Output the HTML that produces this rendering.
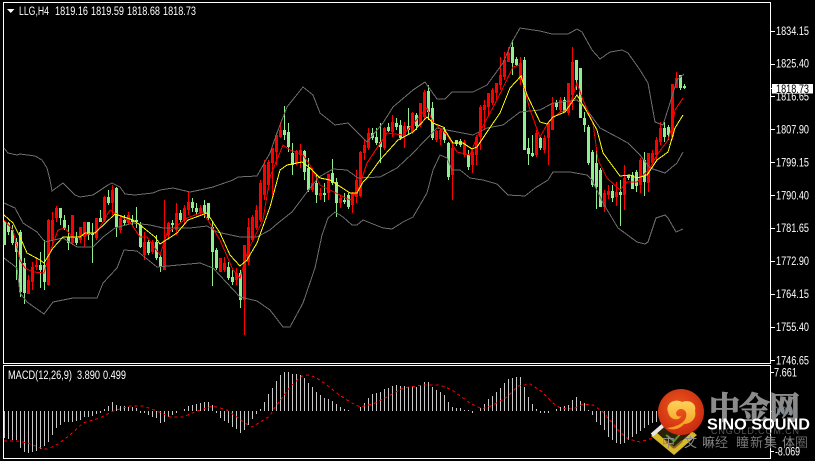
<!DOCTYPE html>
<html><head><meta charset="utf-8"><style>
html,body{margin:0;padding:0;background:#000;width:815px;height:461px;overflow:hidden}
svg{display:block}
text{font-family:"Liberation Sans","Noto Sans CJK SC",sans-serif;fill:#fff}
</style></head><body>
<svg width="815" height="461" viewBox="0 0 815 461" xmlns="http://www.w3.org/2000/svg">
<defs>
<radialGradient id="c" cx="45%" cy="40%" r="65%"><stop offset="0" stop-color="#ee5a1e"/><stop offset="1" stop-color="#c8260e"/></radialGradient>
<linearGradient id="y" x1="0" y1="0" x2="0" y2="1"><stop offset="0" stop-color="#ffd35a"/><stop offset="1" stop-color="#f7961c"/></linearGradient>
</defs>
<rect width="815" height="461" fill="#000"/>
<g fill="none" shape-rendering="crispEdges" stroke="#fff">
<path d="M3.5 2.5H770.5V363.5H3.5Z"/>
<path d="M3.5 365.5H770.5V458.5H3.5Z"/>
<path d="M771 31.5h4M771 64.5h4M771 96.5h4M771 129.5h4M771 162.5h4M771 195.5h4M771 228.5h4M771 261.5h4M771 294.5h4M771 327.5h4M771 360.5h4M771 372.5h3M771 411.5h3M771 451.5h3"/>
</g>
<!-- candles -->
<g fill="none" shape-rendering="crispEdges">
<path stroke="#90ee90" d="M4.5 221V245M8.5 222V235M12.5 225V245M16.5 238V280M20.5 230V297M24.5 258V304M40.5 252V288M44.5 240V290M60.5 208V225M64.5 215V230M68.5 225V250M76.5 232V245M88.5 222V240M92.5 223V263M100.5 210V222M108.5 190V205M116.5 187V237M124.5 215V225M132.5 215V225M136.5 207V228M140.5 222V248M148.5 240V255M156.5 235V260M160.5 255V272M172.5 220V232M180.5 210V222M192.5 198V212M196.5 203V215M204.5 200V218M208.5 203V220M212.5 222V286M216.5 248V270M228.5 262V280M232.5 270V285M240.5 270V308M284.5 106V140M288.5 123V152M292.5 143V175M304.5 150V180M308.5 158V192M316.5 175V203M324.5 183V202M332.5 159V185M336.5 178V217M344.5 193V204M348.5 193V209M372.5 128V140M376.5 128V145M380.5 123V163M388.5 123V132M396.5 118V130M400.5 120V140M408.5 108V135M416.5 113V130M428.5 85V120M432.5 102V140M444.5 127V143M448.5 142V180M456.5 140V146M460.5 139V147M468.5 150V170M512.5 40V75M516.5 57V66M524.5 57V150M528.5 138V165M532.5 135V157M540.5 137V150M556.5 100V110M564.5 97V112M576.5 60V90M580.5 68V118M584.5 112V132M588.5 125V165M592.5 150V187M596.5 150V209M600.5 168V207M612.5 185V202M620.5 180V226M628.5 175V180M632.5 172V189M636.5 170V192M644.5 152V196M664.5 122V142M668.5 125V140M680.5 75V90M684.5 84V89"/>
<path stroke="#90ee90" stroke-width="3" d="M4.5 222V245M8.5 223V232M12.5 230V243M16.5 242V252M20.5 232V292M24.5 263V293M40.5 265V270M44.5 265V282M60.5 208V218M64.5 220V228M68.5 237V243M76.5 238V243M88.5 222V235M92.5 233V235M100.5 218V222M108.5 197V203M116.5 188V227M124.5 220V223M132.5 220V222M136.5 220V222M140.5 225V247M148.5 242V253M156.5 242V258M160.5 257V267M172.5 223V225M180.5 213V220M192.5 202V208M196.5 208V212M204.5 205V213M208.5 203V218M212.5 227V252M216.5 250V268M228.5 267V278M232.5 277V282M240.5 273V300M284.5 130V135M288.5 132V147M292.5 153V165M304.5 151V172M308.5 168V190M316.5 183V195M324.5 193V195M332.5 173V183M336.5 182V203M344.5 200V202M348.5 195V207M372.5 133V138M376.5 137V143M380.5 142V147M388.5 127V131M396.5 123V127M400.5 125V138M408.5 126V130M416.5 115V126M428.5 91V112M432.5 108V138M444.5 131V140M448.5 143V177M456.5 140V144M460.5 141V145M468.5 155V167M512.5 47V63M516.5 59V65M524.5 60V150M528.5 148V154M532.5 153V156M540.5 138V148M556.5 102V107M564.5 100V112M576.5 60V80M580.5 68V118M584.5 118V125M588.5 127V163M592.5 152V185M596.5 163V187M600.5 170V207M612.5 191V198M620.5 192V195M628.5 175V178M632.5 175V189M636.5 172V186M644.5 160V182M664.5 128V137M668.5 127V135M680.5 75V88M684.5 86V88"/>
<path stroke="#f00" d="M28.5 275V294M32.5 262V290M36.5 257V270M48.5 219V286M52.5 212V245M56.5 206V222M72.5 215V245M80.5 227V243M84.5 222V247M96.5 218V240M104.5 196V222M112.5 185V215M120.5 215V233M128.5 212V225M144.5 232V260M152.5 240V254M164.5 200V270M168.5 222V240M176.5 203V235M184.5 205V225M188.5 192V215M200.5 205V215M220.5 258V272M224.5 257V272M236.5 268V285M244.5 245V335M248.5 218V265M252.5 215V242M256.5 205V230M260.5 180V222M264.5 160V200M268.5 160V190M272.5 148V195M276.5 133V165M280.5 122V138M296.5 150V165M300.5 144V168M312.5 168V192M320.5 188V200M328.5 174V200M340.5 195V208M352.5 192V213M356.5 170V203M360.5 151V197M364.5 140V160M368.5 128V150M384.5 127V150M392.5 115V137M404.5 122V148M412.5 112V134M420.5 103V127M424.5 90V120M436.5 130V142M440.5 129V145M452.5 143V200M464.5 140V157M472.5 150V173M476.5 135V165M480.5 105V150M484.5 100V130M488.5 93V115M492.5 88V105M496.5 83V100M500.5 57V90M504.5 52V80M508.5 47V62M520.5 57V85M536.5 130V157M544.5 135V153M548.5 123V165M552.5 97V130M560.5 97V112M568.5 83V115M572.5 47V110M604.5 190V212M608.5 185V199M616.5 182V206M624.5 165V210M640.5 158V193M648.5 153V192M652.5 150V165M656.5 137V160M660.5 122V145M672.5 84V140M676.5 72V88"/>
<path stroke="#f00" stroke-width="3" d="M28.5 280V294M32.5 267V282M36.5 265V267M48.5 220V285M52.5 220V240M56.5 208V218M72.5 215V243M80.5 227V240M84.5 222V237M96.5 218V238M104.5 197V220M112.5 190V203M120.5 218V230M128.5 215V223M144.5 242V255M152.5 242V252M164.5 240V270M168.5 223V235M176.5 213V230M184.5 208V220M188.5 202V210M200.5 208V213M220.5 258V272M224.5 263V270M236.5 273V280M244.5 245V300M248.5 227V262M252.5 217V240M256.5 210V228M260.5 183V220M264.5 165V195M268.5 162V185M272.5 148V163M276.5 135V152M280.5 130V137M296.5 151V163M300.5 150V155M312.5 183V190M320.5 193V196M328.5 174V193M340.5 198V203M352.5 193V205M356.5 180V197M360.5 152V196M364.5 145V153M368.5 133V148M384.5 128V148M392.5 122V132M404.5 126V137M412.5 113V132M420.5 103V125M424.5 92V117M436.5 131V140M440.5 130V139M452.5 148V175M464.5 142V155M472.5 152V165M476.5 137V155M480.5 107V137M484.5 105V110M488.5 93V107M492.5 90V103M496.5 83V93M500.5 75V85M504.5 60V77M508.5 53V62M520.5 63V80M536.5 133V155M544.5 138V150M548.5 123V138M552.5 103V130M560.5 100V110M568.5 83V113M572.5 62V95M604.5 193V207M608.5 191V195M616.5 192V197M624.5 178V195M640.5 160V185M648.5 153V183M652.5 153V163M656.5 140V155M660.5 128V142M672.5 84V137M676.5 78V88"/>
</g>
<!-- bollinger -->
<g fill="none" stroke="#6e6e6e" stroke-width="1" shape-rendering="crispEdges">
<polyline points="4,148 8,153 17,155 20,154 35,156 42,160 47,168 50,180 52,191 63,183 75,195 80,197 93,195 108,185 112,183 120,187 125,194 135,195 153,193 160,190 173,188 190,192 200,190 213,187 233,180 238,177 257,176 270,153 277,133 287,107 303,87 313,95 320,113 335,125 348,123 367,142 383,123 393,107 413,90 425,82 437,99 445,99 452,92 473,92 487,85 503,63 512,42 520,28 540,31 552,34 568,34 577,29 582,32 592,50 600,59 610,52 622,50 628,53 640,70 648,83 655,122 663,125 670,103 677,80 684,74"/>
<polyline points="4,203 15,208 23,223 37,232 45,242 63,238 77,247 93,247 103,237 115,228 133,223 150,225 163,228 190,228 207,226 217,232 240,237 257,237 270,230 278,223 292,212 307,192 319,177 333,169 347,170 358,178 380,177 397,168 413,153 437,128 452,131 473,135 487,128 503,125 520,112 540,110 553,103 577,100 585,107 600,128 617,137 628,143 640,155 650,168 665,173 677,163 683,152"/>
<polyline points="4,258 17,268 20,293 27,302 44,314 53,302 73,298 97,298 103,283 117,268 124,250 137,251 157,267 200,263 213,268 240,297 257,301 270,310 283,327 290,327 303,303 315,268 322,235 328,218 335,212 343,217 352,225 357,225 363,220 383,228 392,229 403,222 413,217 427,193 433,170 440,155 447,158 452,170 460,170 470,178 483,180 497,184 508,195 525,196 535,188 548,180 553,172 570,172 587,175 592,180 603,203 618,228 637,242 645,244 648,242 656,218 665,215 668,218 676,232 683,229"/>
</g>
<polyline fill="none" stroke="#f00" stroke-width="1" shape-rendering="crispEdges" points="4,220 13,230 20,260 25,268 33,272 44,273 50,252 58,230 65,228 73,238 97,232 110,210 130,222 140,237 147,237 160,255 167,233 187,218 203,212 220,240 233,270 240,278 248,250 263,220 270,177 283,145 290,150 303,155 310,165 320,185 340,195 350,200 358,190 367,163 377,148 387,133 403,135 427,108 433,122 447,135 457,152 470,155 477,137 497,100 513,67 520,65 523,83 530,110 540,137 548,123 560,112 568,110 577,83 583,100 593,123 598,160 607,178 620,190 627,182 637,182 650,168 657,155 668,140 672,127 675,110 683,98"/>
<polyline fill="none" stroke="#ff0" stroke-width="1" shape-rendering="crispEdges" points="4,215 13,223 20,237 27,253 40,260 44,263 53,248 63,237 80,237 85,233 95,233 115,214 133,220 140,225 155,237 160,244 177,233 188,220 207,213 220,233 230,255 240,266 247,260 257,243 270,207 280,170 287,165 302,162 310,168 320,178 330,180 350,193 357,193 363,182 367,178 380,160 398,140 413,132 427,117 433,123 443,127 453,143 463,143 472,149 477,147 487,132 500,113 510,88 521,76 527,95 540,122 547,124 553,117 565,112 577,95 587,112 597,130 603,153 620,176 630,175 637,178 647,175 657,160 668,152 675,128 683,115"/>
<!-- MACD -->
<path fill="none" stroke="#c8c8c8" shape-rendering="crispEdges" d="M4.5 411V438M8.5 411V439M12.5 411V440M16.5 411V440M20.5 411V448M24.5 411V452M28.5 411V453M32.5 411V452M36.5 411V451M40.5 411V449M44.5 411V446M48.5 411V442M52.5 411V435M56.5 411V428M60.5 411V425M64.5 411V422M68.5 411V422M72.5 411V422M76.5 411V421M80.5 411V420M84.5 411V417M88.5 411V417M92.5 411V416M96.5 411V414M100.5 411V413M104.5 411V409M108.5 411V406M112.5 411V402M116.5 411V405M120.5 411V406M124.5 411V406M128.5 411V407M132.5 411V407M136.5 411V408M140.5 411V413M144.5 411V413M148.5 411V415M152.5 411V417M156.5 411V418M160.5 411V423M164.5 411V422M168.5 411V417M172.5 411V415M176.5 411V413M184.5 411V409M188.5 411V406M192.5 411V405M196.5 411V404M200.5 411V403M204.5 411V402M208.5 411V402M212.5 411V405M216.5 411V413M220.5 411V418M224.5 411V421M228.5 411V423M232.5 411V427M236.5 411V429M240.5 411V433M244.5 411V430M248.5 411V425M252.5 411V419M256.5 411V414M260.5 411V409M264.5 411V402M268.5 411V394M272.5 411V388M276.5 411V381M280.5 411V375M284.5 411V372M288.5 411V372M292.5 411V374M296.5 411V374M300.5 411V375M304.5 411V378M308.5 411V383M312.5 411V387M316.5 411V392M320.5 411V395M324.5 411V398M328.5 411V399M332.5 411V401M336.5 411V404M340.5 411V407M344.5 411V409M348.5 411V410M360.5 411V407M364.5 411V403M368.5 411V398M372.5 411V394M376.5 411V393M380.5 411V392M384.5 411V389M388.5 411V388M392.5 411V386M396.5 411V385M400.5 411V386M404.5 411V386M408.5 411V387M412.5 411V386M416.5 411V387M420.5 411V385M424.5 411V382M428.5 411V382M432.5 411V387M436.5 411V390M440.5 411V392M444.5 411V395M448.5 411V402M452.5 411V407M456.5 411V408M460.5 411V408M464.5 411V410M468.5 411V410M472.5 411V413M480.5 411V408M484.5 411V404M488.5 411V399M492.5 411V396M496.5 411V392M500.5 411V388M504.5 411V383M508.5 411V379M512.5 411V378M516.5 411V377M520.5 411V377M524.5 411V387M528.5 411V397M532.5 411V404M536.5 411V409M540.5 411V413M544.5 411V413M548.5 411V413M556.5 411V409M560.5 411V407M564.5 411V406M568.5 411V405M572.5 411V400M576.5 411V397M580.5 411V401M584.5 411V403M588.5 411V410M592.5 411V415M596.5 411V422M600.5 411V425M604.5 411V430M608.5 411V437M612.5 411V440M616.5 411V443M620.5 411V444M624.5 411V443M628.5 411V440M632.5 411V437M636.5 411V434M640.5 411V431M644.5 411V428M648.5 411V425M652.5 411V423M656.5 411V422"/>
<polyline fill="none" stroke="#f00" stroke-width="1" stroke-dasharray="3,3" shape-rendering="crispEdges" points="4,441 17,441 28,443 43,449 48,449 58,444 70,435 83,423 100,418 113,411 130,406 143,406 157,411 170,417 183,417 197,411 213,406 227,410 245,423 252,427 270,416 273,410 282,398 290,387 302,376 308,375 315,377 327,385 338,394 350,402 360,407 373,404 387,397 403,388 423,385 440,385 452,390 470,403 482,409 493,405 507,397 518,386 530,384 541,391 553,403 560,408 573,409 583,404 593,405 603,412 618,430 628,439 640,442 650,439 660,435"/>
<!-- labels -->
<path d="M7 9H14.5L10.75 13Z" fill="#fff"/>
<g font-size="11.5">
<text x="19" y="15" textLength="30" lengthAdjust="spacingAndGlyphs">LLG,H4</text>
<text x="55" y="15" textLength="33" lengthAdjust="spacingAndGlyphs">1819.16</text>
<text x="91" y="15" textLength="33" lengthAdjust="spacingAndGlyphs">1819.59</text>
<text x="127" y="15" textLength="33" lengthAdjust="spacingAndGlyphs">1818.68</text>
<text x="163" y="15" textLength="33" lengthAdjust="spacingAndGlyphs">1818.73</text>
<text x="8" y="379" textLength="64" lengthAdjust="spacingAndGlyphs">MACD(12,26,9)</text>
<text x="77" y="379" textLength="23" lengthAdjust="spacingAndGlyphs">3.890</text>
<text x="103" y="379" textLength="23" lengthAdjust="spacingAndGlyphs">0.499</text>
<text x="776" y="35" textLength="33" lengthAdjust="spacingAndGlyphs">1834.15</text>
<text x="776" y="67.5" textLength="33" lengthAdjust="spacingAndGlyphs">1825.40</text>
<text x="776" y="100.5" textLength="33" lengthAdjust="spacingAndGlyphs">1816.65</text>
<text x="776" y="133.5" textLength="33" lengthAdjust="spacingAndGlyphs">1807.90</text>
<text x="776" y="166.5" textLength="33" lengthAdjust="spacingAndGlyphs">1799.15</text>
<text x="776" y="199.5" textLength="33" lengthAdjust="spacingAndGlyphs">1790.40</text>
<text x="776" y="232" textLength="33" lengthAdjust="spacingAndGlyphs">1781.65</text>
<text x="776" y="265" textLength="33" lengthAdjust="spacingAndGlyphs">1772.90</text>
<text x="776" y="298" textLength="33" lengthAdjust="spacingAndGlyphs">1764.15</text>
<text x="776" y="331" textLength="33" lengthAdjust="spacingAndGlyphs">1755.40</text>
<text x="776" y="364.5" textLength="33" lengthAdjust="spacingAndGlyphs">1746.65</text>
<text x="774" y="376.5" textLength="23" lengthAdjust="spacingAndGlyphs">7.661</text>
<text x="773" y="415" textLength="19" lengthAdjust="spacingAndGlyphs" style="fill:#4f7fb0">0.00</text>
</g>
<rect x="772" y="84" width="41" height="9.5" fill="#fff" shape-rendering="crispEdges"/>
<path d="M771 88.5h3" stroke="#fff" shape-rendering="crispEdges"/>
<text x="776" y="93" font-size="11.5" textLength="33" lengthAdjust="spacingAndGlyphs" style="fill:#000">1818.73</text>
<!-- watermark logo -->
<g>
<text x="709" y="419" font-size="31" font-weight="700" textLength="91" style="font-family:'Noto Serif CJK SC','Noto Sans CJK SC',serif;fill:#8b8b8b;stroke:#8b8b8b;stroke-width:1">中金网</text>
<text x="711" y="434" font-size="9" textLength="88" style="fill:#555">CNGOLD.COM.CN</text>
<text x="707" y="429.5" font-size="15.5" font-weight="700" textLength="103" lengthAdjust="spacingAndGlyphs" style="fill:#fff">SINO SOUND</text>
<polygon points="651,436 668,420 697,435 674,455" fill="#2a2208"/>
<path d="M674 455L651 436L656 432L674 448L692 432L697 435Z" fill="#d8b92a"/>
<path d="M674 448L666 441M674 448L682 441" stroke="#8a6a20" stroke-width="2" fill="none"/>
<path d="M652 435L667 422" stroke="#e8e8e8" stroke-width="4" fill="none"/>
<path d="M666 435L674 441L682 432" stroke="#4f9a2a" stroke-width="2" fill="none"/>
<path d="M668 423L695 434" stroke="#c9a92a" stroke-width="2" fill="none"/>
<circle cx="681" cy="412" r="23" fill="url(#c)"/>
<path d="M668 412C665 403 675 398 682 402C690 399 697 404 695 411C697 418 691 424 684 424C680 429 673 431 667 428C675 427 684 424 686 417C688 411 682 407 678 410C674 413 677 418 681 416C680 421 670 421 668 412Z" fill="url(#y)"/>
<g font-size="13">
<text x="662" y="447" style="fill:#8a8a8a">中</text>
<text x="684" y="447" style="fill:#8a8a8a">文</text>
<text x="702" y="447" style="fill:#8a8a8a">嘛</text>
<text x="715" y="447" style="fill:#777">经</text>
<text x="736" y="447" style="fill:#777">瞳</text>
<text x="750" y="447" style="fill:#777">新</text>
<text x="764" y="447" style="fill:#888">集</text>
<text x="782" y="447" style="fill:#888">体</text>
<text x="795" y="447" style="fill:#666">圈</text>
</g>
<text x="775" y="455.5" font-size="11.5" textLength="25" lengthAdjust="spacingAndGlyphs">-8.069</text>
</g>
</svg>
</body></html>
